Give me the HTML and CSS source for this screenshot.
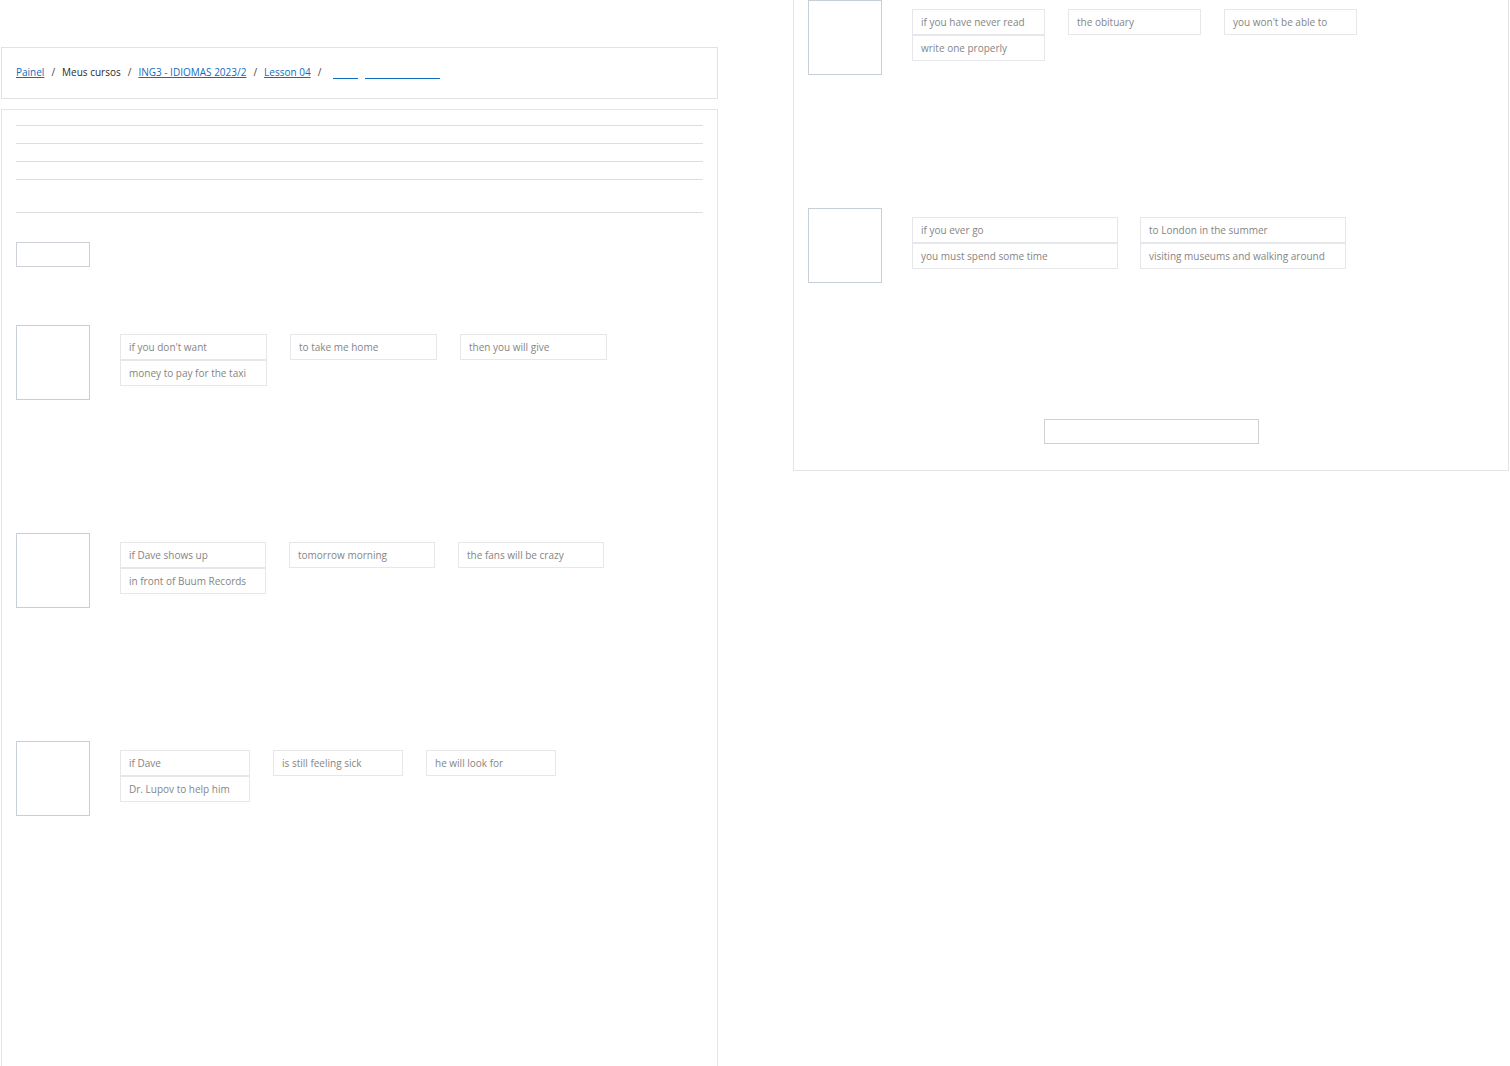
FILE: index.html
```html
<!DOCTYPE html>
<html lang="pt-BR">
<head>
<meta charset="utf-8">
<title>Lesson 04</title>
<link rel="stylesheet" href="styles.css">
</head>
<body>
<div class="page">
  <div class="col col-left">
    <nav class="crumbs">
      <a href="#" class="link">Painel</a><span class="sep">/</span><span class="plain">Meus cursos</span><span class="sep">/</span><a href="#" class="link">ING3 - IDIOMAS 2023/2</a><span class="sep">/</span><a href="#" class="link">Lesson 04</a><span class="sep">/</span><a href="#" class="blank blank-s"></a><a href="#" class="blank blank-l"></a>
    </nav>
    <section class="card card-top">
      <div class="lines">
        <div class="line"></div>
        <div class="line"></div>
        <div class="line"></div>
        <div class="line"></div>
        <div class="line line-gap"></div>
      </div>
      <div class="btn btn-small"></div>

      <div class="row">
        <div class="pic"></div>
        <div class="groups">
          <div class="group w147"><div class="box">if you don't want</div><div class="box">money to pay for the taxi</div></div>
          <div class="group w147"><div class="box">to take me home</div></div>
          <div class="group w147"><div class="box">then you will give</div></div>
        </div>
      </div>

      <div class="row">
        <div class="pic"></div>
        <div class="groups">
          <div class="group w146"><div class="box">if Dave shows up</div><div class="box">in front of Buum Records</div></div>
          <div class="group w146"><div class="box">tomorrow morning</div></div>
          <div class="group w146"><div class="box">the fans will be crazy</div></div>
        </div>
      </div>

      <div class="row">
        <div class="pic"></div>
        <div class="groups">
          <div class="group w130"><div class="box">if Dave</div><div class="box">Dr. Lupov to help him</div></div>
          <div class="group w130"><div class="box">is still feeling sick</div></div>
          <div class="group w130"><div class="box">he will look for</div></div>
        </div>
      </div>
    </section>
  </div>

  <div class="col col-right">
    <section class="card card-bottom">
      <div class="row">
        <div class="pic"></div>
        <div class="groups">
          <div class="group w133"><div class="box">if you have never read</div><div class="box">write one properly</div></div>
          <div class="group w133"><div class="box">the obituary</div></div>
          <div class="group w133"><div class="box">you won't be able to</div></div>
        </div>
      </div>

      <div class="row">
        <div class="pic"></div>
        <div class="groups groups-tight">
          <div class="group w206"><div class="box">if you ever go</div><div class="box">you must spend some time</div></div>
          <div class="group w206"><div class="box">to London in the summer</div><div class="box">visiting museums and walking around</div></div>
        </div>
      </div>

      <div class="actions">
        <div class="btn btn-wide"></div>
      </div>
    </section>
  </div>
</div>
</body>
</html>
```

FILE: styles.css
```css
* { box-sizing: border-box; }

html, body {
  margin: 0;
  padding: 0;
  background: #ffffff;
  height: 100%;
  overflow: hidden;
}

body {
  font-family: "Open Sans", "Noto Sans", "DejaVu Sans", sans-serif;
  color: #1d2125;
}

.page {
  display: flex;
  align-items: flex-start;
  height: 100vh;
}

.col {
  width: 717px;
  flex: none;
}

.col-left {
  margin-left: 1px;
  height: 100vh;
  display: flex;
  flex-direction: column;
  padding-top: 47px;
}

.col-right {
  margin-left: 75px;
  width: 716px;
}

/* breadcrumb */
.crumbs {
  height: 52px;
  border: 1px solid #e2e2e2;
  padding: 0 14px 2px;
  display: flex;
  align-items: center;
  font-size: 10px;
  line-height: 14px;
  flex: none;
}

.link {
  color: #0f6cbf;
  text-decoration: underline;
}

.plain {
  color: #2b2b2b;
}

.sep {
  color: #444;
  margin: 0 7px;
}

.blank {
  display: inline-block;
  height: 14px;
  border-bottom: 1px solid #0f6cbf;
}

.blank-s {
  width: 25px;
  margin-left: 5px;
}

.blank-l {
  width: 75px;
  margin-left: 7px;
}

/* cards */
.card {
  border: 1px solid #e4e4e4;
  padding: 0 14px;
}

.card-top {
  margin-top: 10px;
  flex: 1;
  border-bottom: none;
  padding-top: 15px;
}

.card-bottom {
  border-top: none;
  padding-bottom: 26px;
}

.lines {
  display: flex;
  flex-direction: column;
}

.line {
  height: 18px;
  border-top: 1px solid #dcdde3;
}

.line:last-child {
  height: 1px;
}

.line-gap {
  margin-top: 15px;
}

.btn {
  height: 25px;
  border: 1px solid #cdd0d6;
  background: #fff;
}

.btn-small {
  width: 74px;
  margin-top: 29px;
  margin-bottom: 58px;
}

.actions {
  display: flex;
  justify-content: center;
  margin-top: 3px;
}

.btn-wide {
  width: 215px;
}

/* exercise rows */
.row {
  display: flex;
  align-items: flex-start;
  height: 208px;
}

.pic {
  width: 74px;
  height: 75px;
  border: 1px solid #c6ced8;
  flex: none;
  margin-right: 30px;
}

.groups {
  display: flex;
  gap: 23px;
  margin-top: 9px;
}

.groups-tight {
  gap: 22px;
}

.group {
  display: flex;
  flex-direction: column;
}

.w147 { width: 147px; }
.w146 { width: 146px; }
.w130 { width: 130px; }
.w133 { width: 133px; }
.w206 { width: 206px; }

.box {
  height: 26px;
  border: 1px solid #e6e7ea;
  padding: 0 8px;
  font-size: 10px;
  line-height: 24px;
  color: #858585;
  white-space: nowrap;
  overflow: hidden;
}
```
